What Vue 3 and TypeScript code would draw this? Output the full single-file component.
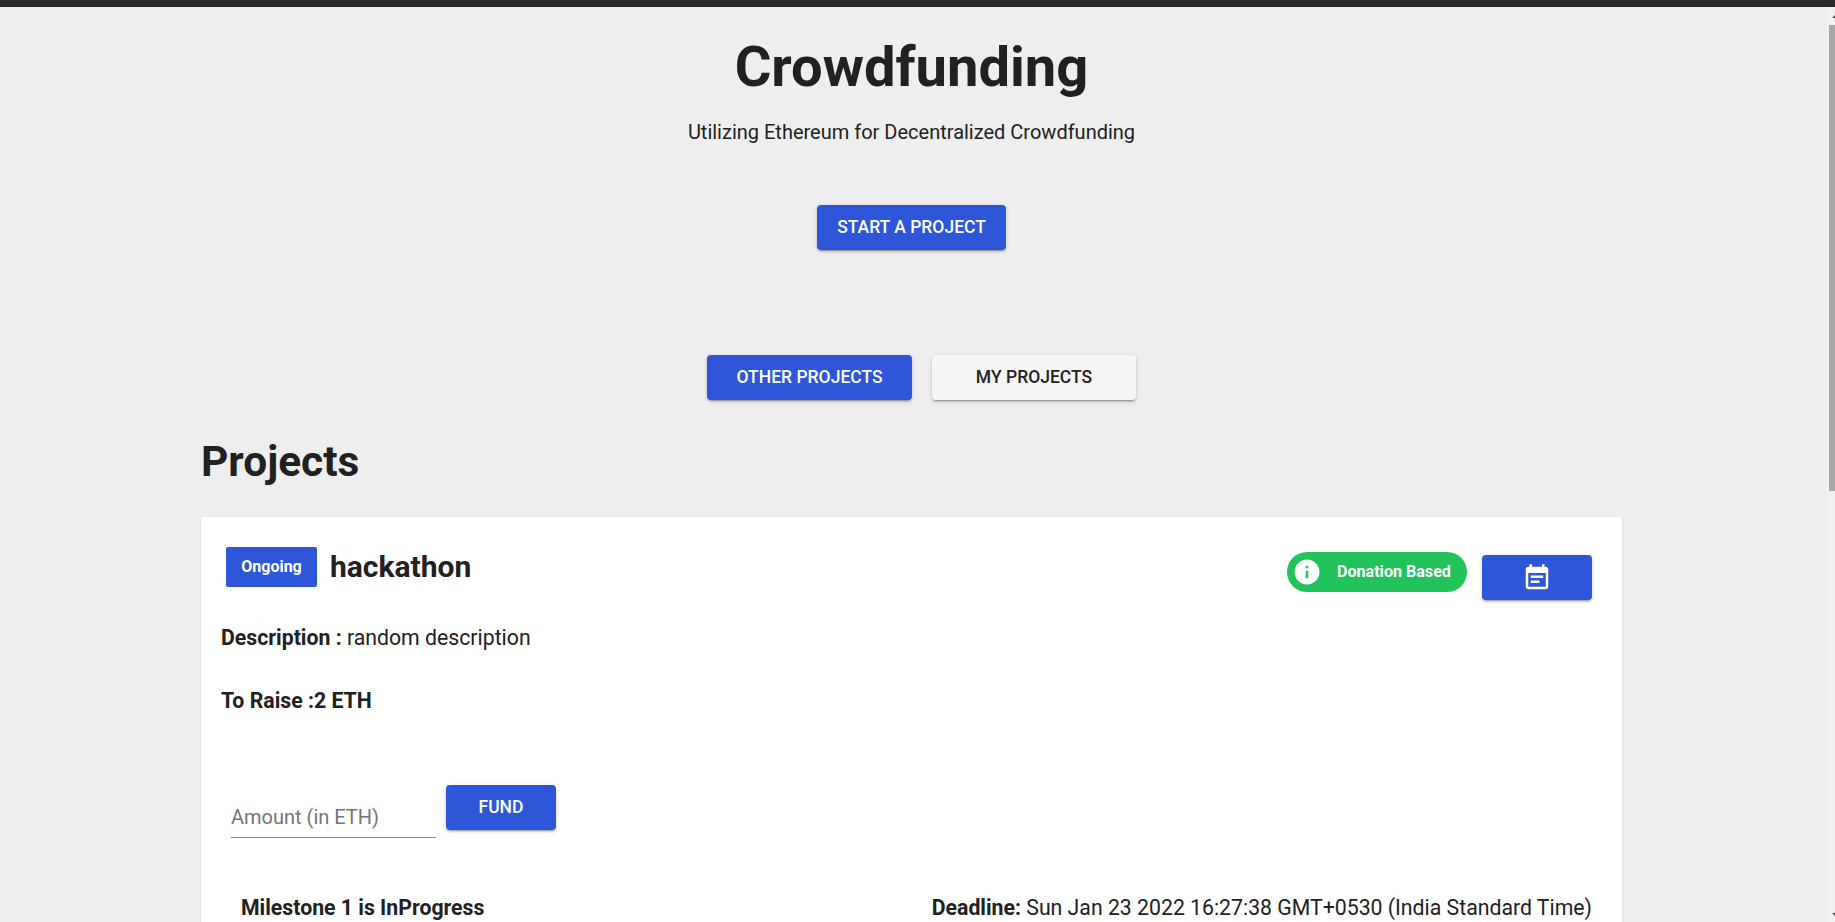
<script setup lang="ts">
const project = {
  status: 'Ongoing',
  title: 'hackathon',
  description: 'random description',
  goal: '2 ETH',
  milestone: 'Milestone 1 is InProgress',
  deadline: 'Sun Jan 23 2022 16:27:38 GMT+0530 (India Standard Time)',
}
</script>

<template>
  <div class="page">
    <div class="topbar"></div>

    <main class="content">
      <header class="hero">
        <h1 class="hero-title">Crowdfunding</h1>
        <p class="hero-sub">Utilizing Ethereum for Decentralized Crowdfunding</p>
        <button class="btn btn-primary btn-start">Start a project</button>
      </header>

      <div class="tabs">
        <button class="btn btn-primary btn-other">Other projects</button>
        <button class="btn btn-light btn-mine">My projects</button>
      </div>

      <h2 class="section-title">Projects</h2>

      <section class="card">
        <div class="card-head">
          <div class="card-name">
            <span class="badge">{{ project.status }}</span>
            <h3 class="name">{{ project.title }}</h3>
          </div>
          <div class="card-actions">
            <span class="chip">
              <svg class="chip-icon" viewBox="0 0 24 24" fill="#fff">
                <path d="M12 2C6.48 2 2 6.48 2 12s4.48 10 10 10 10-4.48 10-10S17.52 2 12 2zm1 15h-2v-6h2v6zm0-8h-2V7h2v2z" />
              </svg>
              <span class="chip-label">Donation Based</span>
            </span>
            <button class="btn btn-primary btn-icon" aria-label="Timeline">
              <svg viewBox="0 0 24 24" width="30" height="30" fill="#fff">
                <path d="M17 10H7v2h10v-2zm2-7h-1V1h-2v2H8V1H6v2H5c-1.11 0-1.99.9-1.99 2L3 19c0 1.1.89 2 2 2h14c1.1 0 2-.9 2-2V5c0-1.1-.9-2-2-2zm0 16H5V8h14v11zm-5-5H7v2h7v-2z" />
              </svg>
            </button>
          </div>
        </div>

        <p class="line line-desc"><b>Description : </b>{{ project.description }}</p>
        <p class="line line-goal"><b>To Raise :{{ project.goal }}</b></p>

        <div class="fund">
          <input class="amount" type="text" placeholder="Amount (in ETH)" />
          <button class="btn btn-primary btn-fund">Fund</button>
        </div>

        <div class="milestone">
          <b>{{ project.milestone }}</b>
          <span><b>Deadline: </b>{{ project.deadline }}</span>
        </div>
      </section>
    </main>

    <div class="scrollbar">
      <span class="arrow arrow-up"></span>
      <span class="thumb"></span>
      <span class="arrow arrow-down"></span>
    </div>
  </div>
</template>

<style>
html,
body {
  margin: 0;
  height: 922px;
  overflow: hidden;
  background: #eeeeee;
}
</style>

<style scoped>
.page {
  position: relative;
  height: 922px;
  overflow: hidden;
  font-family: Roboto, "Liberation Sans", sans-serif;
  color: #212121;
}

.topbar {
  height: 7px;
  background: #2b2b2b;
}

.content {
  width: 1823px;
  box-sizing: border-box;
  padding: 0 201px;
}

.hero {
  display: flex;
  flex-direction: column;
  align-items: center;
}

.hero-title {
  margin: 27px 0 0;
  font-size: 56.1px;
  line-height: 66px;
  font-weight: 700;
}

.hero-sub {
  margin: 20px 0 0;
  font-size: 20px;
  line-height: 24px;
}

.btn {
  border: 0;
  border-radius: 4px;
  font-family: inherit;
  font-weight: 500;
  font-size: 17.5px;
  text-transform: uppercase;
  box-shadow: 0 3px 1px -2px rgba(0, 0, 0, 0.2), 0 2px 2px 0 rgba(0, 0, 0, 0.14), 0 1px 5px 0 rgba(0, 0, 0, 0.12);
  display: inline-flex;
  align-items: center;
  justify-content: center;
  height: 45px;
  padding: 0 0 1px;
}

.btn-primary {
  background: #2d56d9;
  color: #fff;
}

.btn-light {
  background: #f5f5f5;
  color: #212121;
}

.btn-start {
  margin-top: 61px;
  width: 189px;
}

.tabs {
  display: flex;
  justify-content: center;
  gap: 20px;
  margin-top: 105px;
  padding-left: 20px;
}

.btn-other {
  width: 205px;
}

.btn-mine {
  width: 204px;
}

.section-title {
  margin: 37px 0 0;
  font-size: 42.4px;
  line-height: 50px;
  font-weight: 700;
}

.card {
  margin-top: 30px;
  background: #fff;
  border-radius: 3px;
  box-shadow: 0 2px 1px -1px rgba(0, 0, 0, 0.2), 0 1px 1px 0 rgba(0, 0, 0, 0.14), 0 1px 3px 0 rgba(0, 0, 0, 0.12);
  padding: 30px 30px 40px 20px;
  box-sizing: border-box;
  font-size: 21.25px;
}

.card-head {
  display: flex;
  justify-content: space-between;
  align-items: flex-start;
}

.card-name {
  display: flex;
  align-items: center;
  gap: 13px;
  padding-left: 5px;
}

.badge {
  display: flex;
  align-items: center;
  justify-content: center;
  width: 91px;
  height: 40px;
  box-sizing: border-box;
  padding-bottom: 2px;
  background: #2d56d9;
  border-radius: 2px;
  color: #fff;
  font-size: 16px;
  font-weight: 700;
}

.name {
  margin: -2px 0 0;
  font-size: 30px;
  font-weight: 700;
}

.card-actions {
  display: flex;
  align-items: flex-start;
  gap: 15px;
  margin-top: 5px;
}

.chip {
  display: flex;
  align-items: center;
  width: 180px;
  height: 40px;
  box-sizing: border-box;
  padding-left: 5px;
  border-radius: 20px;
  background: #22c35a;
  color: #fff;
  font-size: 16.1px;
  font-weight: 700;
}

.chip-icon {
  width: 30px;
  height: 30px;
  flex-shrink: 0;
}

.chip-label {
  margin: -2px 0 0 15px;
}

.btn-icon {
  width: 110px;
  margin-top: 3px;
  padding: 0;
}

.line {
  margin: 0;
  line-height: 28px;
}

.line-desc {
  margin-top: 24px;
}

.line-goal {
  margin-top: 35px;
}

.fund {
  display: flex;
  align-items: flex-start;
  gap: 10px;
  margin-top: 70px;
  padding-left: 10px;
}

.amount {
  width: 205px;
  height: 44px;
  box-sizing: border-box;
  margin-top: 9px;
  padding: 2px 0 0;
  border: 0;
  border-bottom: 1px solid #8a8a8a;
  outline: 0;
  background: transparent;
  font-family: inherit;
  font-size: 20px;
}

.amount::placeholder {
  color: #757575;
  opacity: 1;
}

.btn-fund {
  width: 110px;
}

.milestone {
  display: flex;
  justify-content: space-between;
  margin-top: 57px;
  padding-left: 20px;
}

.scrollbar {
  position: absolute;
  top: 7px;
  right: 0;
  bottom: 0;
  width: 8px;
  background: #f1f1f1;
}

.thumb {
  position: absolute;
  top: 18px;
  left: 2px;
  right: 0;
  height: 466px;
  background: #a8a8a8;
}

.arrow {
  position: absolute;
  right: 0;
  width: 0;
  height: 0;
  border-left: 3px solid transparent;
  border-right: 0;
}

.arrow-up {
  top: 8px;
  border-bottom: 3px solid #505050;
}

.arrow-down {
  bottom: 6px;
  border-top: 3px solid #505050;
}
</style>
